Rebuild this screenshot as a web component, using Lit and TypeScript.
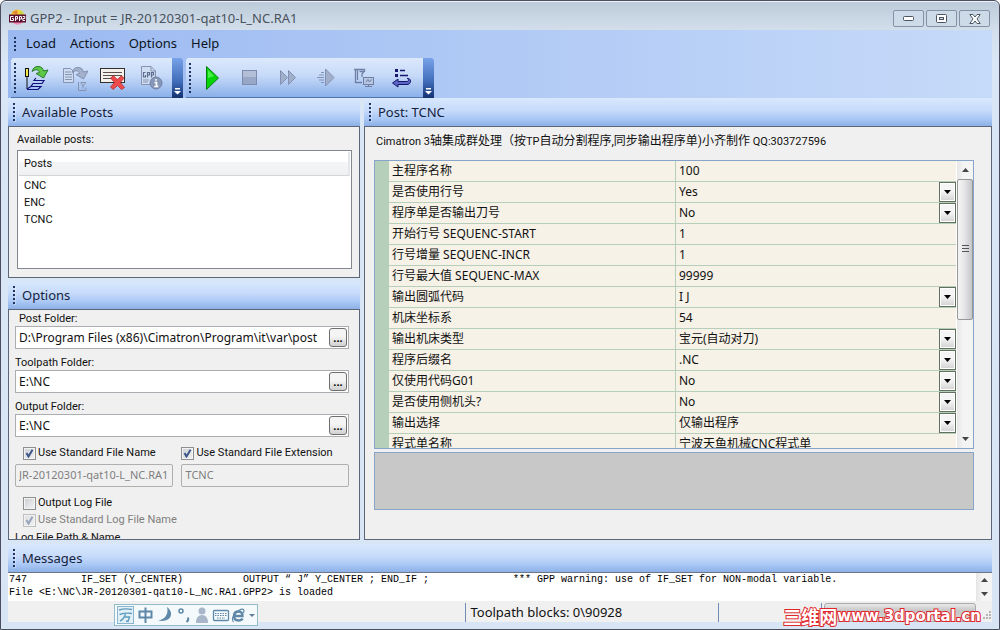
import { LitElement, html, css, svg, nothing } from "lit";
import { customElement, property, state } from "lit/decorators.js";
import { classMap } from "lit/directives/class-map.js";

type Row = { name: string; value: string; options?: string[] };

const ROWS: Row[] = [
  { name: "主程序名称", value: "100" },
  { name: "是否使用行号", value: "Yes", options: ["Yes", "No"] },
  { name: "程序单是否输出刀号", value: "No", options: ["No", "Yes"] },
  { name: "开始行号 SEQUENC-START", value: "1" },
  { name: "行号增量 SEQUENC-INCR", value: "1" },
  { name: "行号最大值 SEQUENC-MAX", value: "99999" },
  { name: "输出圆弧代码", value: "I J", options: ["I J", "R"] },
  { name: "机床坐标系", value: "54" },
  { name: "输出机床类型", value: "宝元(自动对刀)", options: ["宝元(自动对刀)"] },
  { name: "程序后缀名", value: ".NC", options: [".NC"] },
  { name: "仅使用代码G01", value: "No", options: ["No", "Yes"] },
  { name: "是否使用侧机头?", value: "No", options: ["No", "Yes"] },
  { name: "输出选择", value: "仅输出程序", options: ["仅输出程序"] },
  { name: "程式单名称", value: "宁波天鱼机械CNC程式单" },
];

const POSTS = ["CNC", "ENC", "TCNC"];

const LOG = [
  "747" + " ".repeat(9) + "IF_SET (Y_CENTER)" + " ".repeat(10) + "OUTPUT “ J” Y_CENTER ; END_IF ;" +
    " ".repeat(14) + "*** GPP warning: use of IF_SET for NON-modal variable.",
  "File <E:\\NC\\JR-20120301-qat10-L_NC.RA1.GPP2> is loaded",
].join("\n");

const reloadArrow = (fill: string, edge: string) => svg`
  <path d="M8 6.5C9 3 11 1.5 14 1.5C17.5 1.5 19 3.5 19.5 6L24 5L19.500 13L12 8.500L15.500 7.500C15 5.500 13.500 4.500 12 4.700C10.500 4.900 9.500 5.500 8 6.500Z"
    fill=${fill} stroke=${edge} stroke-width="1"/>`;

const ICONS: Record<string, unknown> = {
  load: svg`
    <rect x="1.500" y="3.500" width="3" height="8" fill="#f4e84a" stroke="#111"/>
    <path d="M3 12V24" stroke="#111" fill="none"/>
    <path d="M3 24.500H14L17 21.500H7L9 18.500H18L20 15.500H10L12 13M3 24L7 21.500" stroke="#10107c" fill="none" stroke-width="1.200"/>
    ${reloadArrow("#5cc947", "#2a7a2c")}`,
  convert: svg`
    <path d="M1.500 3.500H8.500L11.500 6.500V17.500H1.500Z" fill="#cddcf0" stroke="#8793b0"/>
    <path d="M3 7H9M3 9.500H10M3 12H10M3 14.500H10" stroke="#8793b0"/>
    <g transform="translate(2 1)">${reloadArrow("#a3b1cc", "#8491b0")}</g>
    <path d="M16.500 17V25.500H24V22.500M18.500 17.500H24M19 18L21 21L23.500 18M21 21V23.500" stroke="#8793b0" fill="none"/>`,
  remove: svg`
    <rect x="0.500" y="3.500" width="24" height="14" fill="#f4f1ec" stroke="#34302e"/>
    <path d="M3 7.500H22M3 10.500H22M3 13.500H12" stroke="#57504c"/>
    <path d="M10.500 13L13.500 10.800L17.300 14.500L21.500 10.800L24 13.200L20.300 17.500L24.500 22.500L21.500 24.500L17.500 20.500L13 24.500L10.500 22L14.500 17.500Z" fill="#ee4b4b" stroke="#b32a35" stroke-width="0.800"/>`,
  info: svg`
    <path d="M3.500 1.500H13L17.500 6V19.500H3.500Z" fill="#cfdef3" stroke="#8793b0"/>
    <path d="M13 1.500V6H17.500" fill="none" stroke="#8793b0"/>
    <path d="M7.500 7.500H5.500V12H7.500V10M9.500 12.500V7.500H11.500V10H9.500M13.500 12.500V7.500H15.500V10H13.500" fill="none" stroke="#5f6d90" stroke-width="1.200"/>
    <path d="M5 15H11M5 17H10" stroke="#8793b0"/>
    <circle cx="18" cy="18" r="6" fill="#8797b8" stroke="#6f80a6"/>
    <path d="M18 14V15.800M16.500 17.500H18.500V21.500M16.300 21.500H20.300" stroke="#fff" stroke-width="1.600" fill="none"/>`,
  play: svg`<path d="M7.500 1.500L19.500 13L7.500 24.500Z" fill="#07d407" stroke="#0a7d12" stroke-width="1"/><path d="M9 5L15 11L9 13Z" fill="#49f049"/>`,
  stop: svg`<rect x="5.500" y="5.500" width="14" height="14" fill="#98a7c6" stroke="#7d8cae"/><rect x="6" y="6" width="13" height="6" fill="#b3bfd7"/>`,
  forward: svg`<path d="M5.500 5.500L12.500 12.500L5.500 19.500ZM13.500 5.500L20.500 12.500L13.500 19.500Z" fill="#a1afcb" stroke="#8392b4"/>`,
  step: svg`<path d="M12.500 4L21 12.500L12.500 21Z" fill="#a1afcb" stroke="#8392b4"/>
    <path d="M8 7.500H11M6 10H11M4 12.500H11M6 15H11M8 17.500H11" stroke="#8392b4"/>`,
  machine: svg`
    <path d="M3 4.500H6M4.500 4V17.500H11M6.500 4.500V15M6 4.500H13.500V7M8.500 6.500H13L11 9V12" fill="none" stroke="#6f7fa5" stroke-width="1.300"/>
    <rect x="12.500" y="12.500" width="10" height="7" fill="#b7c6e0" stroke="#6f7fa5"/>
    <path d="M15 17L17 14.500L18.500 17L20.500 14.500M14 21.500H21M17.500 20V21" stroke="#6f7fa5" fill="none"/>`,
  list: svg`
    <rect x="6" y="4" width="3" height="3" fill="#16166e"/><rect x="6" y="9" width="3" height="3" fill="#16166e"/>
    <path d="M11 5.500H16M11 10.500H19" stroke="#16166e" stroke-width="1.600"/>
    <path d="M3.500 18L9 14V16.500H18C20 16.500 20 13.500 18 13.500C22.500 12.500 23 19.500 18 19.500H9V22Z" fill="#5b66c4" stroke="#16166e"/>`,
};

const font = css`"Noto Sans", "Noto Sans CJK SC", sans-serif`;
const small = css`Roboto, "Noto Sans CJK SC", sans-serif`;

@customElement("dock-header")
export class DockHeader extends LitElement {
  static styles = css`
    :host {
      display: flex;
      align-items: center;
      gap: 7px;
      height: 28px;
      flex: none;
      padding-left: 5px;
      background: linear-gradient(#d8e8fd, #c6dafa 45%, #a9c7f5 75%, #8db0e6);
      color: #16233c;
      font: 13px/18px ${font};
    }
    .grip {
      width: 2px;
      height: 18px;
      background: repeating-linear-gradient(#1f3560 0 2px, transparent 2px 4px);
      box-shadow: 1px 1px 0 rgba(255, 255, 255, 0.3);
    }
    .title {
      margin: 0;
      font: inherit;
    }
  `;
  render() {
    return html`<span class="grip"></span><h2 class="title"><slot></slot></h2>`;
  }
}

@customElement("tool-strip")
export class ToolStrip extends LitElement {
  @property({ attribute: false }) tools: [string, string][] = [];

  static styles = css`
    :host {
      display: flex;
      height: 40px;
      border-radius: 3px 3px 0 0;
      overflow: hidden;
      background: linear-gradient(#dce9fc, #c5d9f8 45%, #88aee8);
      box-shadow: inset 0 -1px #5375ad;
    }
    .grip {
      width: 2px;
      margin: 5px 2px 5px 3px;
      background: repeating-linear-gradient(#1f3560 0 2px, transparent 2px 4px);
    }
    .tool {
      display: grid;
      place-items: center;
      width: 38px;
      padding: 0;
      border: 0;
      background: none;
    }
    .icon {
      width: 26px;
      height: 26px;
    }
    .more {
      display: grid;
      align-items: end;
      justify-items: center;
      width: 11px;
      margin-left: 2px;
      padding: 0 0 3px;
      border: 0;
      background: linear-gradient(#78a2e8, #3f6bb8 60%, #13316f);
    }
  `;
  render() {
    return html`<span class="grip"></span>
      ${this.tools.map(
        ([icon, label]) => html`<button class="tool" aria-label=${label}>
          <svg class="icon" viewBox="0 0 26 26" aria-hidden="true">${ICONS[icon]}</svg>
        </button>`
      )}
      <button class="more" aria-label="Toolbar options">
        <svg width="7" height="7" viewBox="0 0 7 7"><path d="M1 0H6V1.500H1ZM0 3H7L3.500 6.500Z" fill="#fff" /></svg>
      </button>`;
  }
}

@customElement("scroll-track")
export class ScrollTrack extends LitElement {
  @property({ type: Boolean }) thumb = false;

  static styles = css`
    :host {
      display: flex;
      flex-direction: column;
      justify-content: space-between;
      width: 16px;
      flex: none;
      background: linear-gradient(90deg, #e6e6e6, #f4f4f4 40%);
    }
    .end {
      display: grid;
      place-items: center;
      height: 18px;
      padding: 0;
      border: 0;
      background: none;
    }
    .compact {
      height: 14px;
    }
    .run {
      flex: 1;
    }
    .bar {
      box-sizing: border-box;
      display: grid;
      place-items: center;
      height: 56%;
      border: 1px solid #979797;
      border-radius: 2px;
      background: linear-gradient(90deg, #f5f5f5, #e6e6e8 45%, #c4c6ca);
    }
  `;
  render() {
    const cls = classMap({ end: true, compact: !this.thumb });
    return html`<button class=${cls} aria-label="Scroll up">
        <svg width="7" height="4"><path d="M0 4L3.500 0L7 4Z" fill="#444" /></svg>
      </button>
      ${this.thumb
        ? html`<div class="run"><div class="bar">
            <svg width="7" height="8"><path d="M0 .5H7M0 3.500H7M0 6.500H7" stroke="#555" /></svg>
          </div></div>`
        : nothing}
      <button class=${cls} aria-label="Scroll down">
        <svg width="7" height="4"><path d="M0 0L3.500 4L7 0Z" fill="#444" /></svg>
      </button>`;
  }
}

@customElement("property-grid")
export class PropertyGrid extends LitElement {
  @property({ attribute: false }) rows: Row[] = [];

  static styles = css`
    :host {
      display: flex;
      overflow: hidden;
      border: 1px solid #86a5c9;
      background: #f6f2e7;
      font: 12px/20px ${font};
      color: #111;
    }
    .view {
      flex: 1;
      min-width: 0;
      overflow: hidden;
    }
    .table {
      width: 100%;
      table-layout: fixed;
      border-collapse: separate;
      border-spacing: 0;
      border-right: 1px solid #fff;
    }
    .gutter-col {
      width: 14px;
    }
    .name-col {
      width: 49.4%;
    }
    .gutter,
    .name,
    .value {
      box-sizing: border-box;
      height: 21px;
      padding: 0;
      border-bottom: 1px solid #b5cfbb;
      text-align: left;
      font-weight: 400;
    }
    .gutter {
      background: #b5cfbb;
    }
    .name {
      padding-left: 3px;
      border-right: 1px solid #b5cfbb;
      white-space: nowrap;
    }
    .cell {
      display: grid;
      grid-template-columns: minmax(0, 1fr) 17px;
      height: 20px;
    }
    .field {
      grid-area: 1 / 1 / 2 / 3;
      width: 100%;
      height: 20px;
      padding: 0 3px;
      border: 0;
      outline: 0;
      appearance: none;
      background: transparent;
      font: inherit;
      color: inherit;
    }
    .drop {
      grid-area: 1 / 2;
      box-sizing: border-box;
      display: grid;
      place-items: center;
      border: 1px solid #61705f;
      box-shadow: inset 0 0 0 1px #fff;
      background: linear-gradient(#f5f5f5 45%, #d2d2d2);
      pointer-events: none;
    }
  `;
  render() {
    return html`<div class="view">
        <table class="table">
          <colgroup><col class="gutter-col" /><col class="name-col" /><col /></colgroup>
          <tbody>
            ${this.rows.map(
              (r, i) => html`<tr>
                <td class="gutter"></td>
                <th class="name" scope="row"><label for="p${i}">${r.name}</label></th>
                <td class="value">
                  <div class="cell">
                    ${r.options
                      ? html`<select class="field" id="p${i}">
                            ${r.options.map((o) => html`<option ?selected=${o === r.value}>${o}</option>`)}
                          </select>
                          <span class="drop"><svg width="7" height="4"><path d="M0 0H7L3.500 4Z" fill="#000" /></svg></span>`
                      : html`<input class="field" id="p${i}" .value=${r.value} />`}
                  </div>
                </td>
              </tr>`
            )}
          </tbody>
        </table>
      </div>
      <scroll-track thumb></scroll-track>`;
  }
}

@customElement("app-root")
export class AppRoot extends LitElement {
  @state() private logging = false;

  static styles = css`
    :host {
      display: block;
      font: 12px/16px ${font};
      color: #111;
    }
    .window {
      box-sizing: border-box;
      position: relative;
      display: flex;
      flex-direction: column;
      height: 100vh;
      min-height: 560px;
      padding: 0 7px 7px;
      border: 1px solid #4b4e5c;
      border-radius: 6px 6px 0 0;
      background: linear-gradient(#bccad9, #d3dfeb 30px, #d9e6f5 60px, #d8e5f4);
      box-shadow: inset 0 1px #eef4fa;
    }
    .titlebar {
      display: flex;
      align-items: center;
      gap: 4px;
      height: 29px;
      padding: 0 2px 0 1px;
      flex: none;
      font-size: 13px;
      color: #49525d;
    }
    .title {
      flex: 1;
      margin: 4px 0 0;
      font: inherit;
    }
    .logo {
      margin-top: 4px;
    }
    .winbtns {
      display: flex;
      gap: 2px;
      margin-top: 6px;
    }
    .winbtn {
      display: grid;
      place-items: center;
      width: 31px;
      height: 17px;
      box-sizing: border-box;
      padding: 0;
      border: 1px solid #8592a6;
      border-radius: 2px;
      background: #cddae7;
    }
    .bars {
      flex: none;
      background: linear-gradient(90deg, #9bb9f1, #c6daf9);
    }
    .menu {
      display: flex;
      align-items: center;
      height: 28px;
      padding-left: 6px;
      font-size: 13px;
    }
    .grip {
      width: 2px;
      height: 14px;
      margin-right: 3px;
      background: repeating-linear-gradient(#1f3560 0 2px, transparent 2px 4px);
    }
    .item {
      padding: 0 7px 2px;
      border: 0;
      background: none;
      font: inherit;
      color: #0c1422;
    }
    .strips {
      display: flex;
      gap: 3px;
      padding-left: 3px;
    }
    .main {
      flex: 1;
      min-height: 0;
      display: grid;
      grid-template-columns: minmax(0, 352fr) minmax(0, 628fr);
      gap: 4px;
    }
    .dock {
      display: flex;
      flex-direction: column;
      min-height: 0;
    }
    .panel {
      box-sizing: border-box;
      border: 1px solid #5d6679;
      background: #f0f0f0;
      font: 11px/14px ${small};
    }
    .posts {
      margin-bottom: 3px;
      padding: 6px 7px 8px 8px;
    }
    .listbox {
      box-sizing: border-box;
      height: 119px;
      margin-top: 3px;
      padding: 1px;
      border: 1px solid #828790;
      background: #fff;
    }
    .posthead {
      padding: 5px 5px 4px;
      border-right: 2px solid #e3e6ea;
      border-bottom: 1px solid #d5d5d5;
      background: linear-gradient(#fff 42%, #f4f5f7 42%, #f0f1f3);
    }
    .postlist {
      margin: 1px 0 0;
      padding: 0 5px;
      list-style: none;
      line-height: 17px;
    }
    .options {
      flex: 1;
      min-height: 0;
      overflow: hidden;
      padding: 2px 10px 0 6px;
    }
    .label {
      display: block;
      margin-top: 7px;
    }
    .first {
      margin: 0 0 0 4px;
    }
    .box {
      display: flex;
      align-items: center;
      box-sizing: border-box;
      height: 23px;
      padding-right: 1px;
      border: 1px solid #abadb3;
      background: #fff;
    }
    .path {
      flex: 1;
      min-width: 0;
      height: 21px;
      box-sizing: border-box;
      padding: 0 0 0 3px;
      border: 0;
      outline: 0;
      background: none;
      font: 12px/20px ${font};
      color: #111;
    }
    .browse {
      width: 18px;
      height: 19px;
      padding: 0;
      border: 1px solid #707070;
      border-radius: 3px;
      background: linear-gradient(#f4f4f4 45%, #cfcfcf);
      font: bold 11px/16px ${font};
    }
    .pair {
      display: grid;
      grid-template-columns: 158fr 167fr;
      gap: 8px;
    }
    .checks {
      margin: 8px 0 3px;
    }
    .checkline {
      display: flex;
      align-items: center;
      gap: 2px;
      height: 16px;
      padding-left: 8px;
      white-space: nowrap;
    }
    .near {
      padding-left: 0;
    }
    .check {
      width: 13px;
      height: 13px;
      margin: 0;
      flex: none;
      box-sizing: border-box;
      appearance: none;
      border: 1px solid #8e8f8f;
      box-shadow: inset 0 0 0 1px #f4f4f4;
      background: linear-gradient(135deg, #c9cdd3, #f4f4f4);
    }
    .check:checked {
      background: url("data:image/svg+xml,%3Csvg xmlns='http://www.w3.org/2000/svg' viewBox='0 0 11 11'%3E%3Cpath d='M2.500 5L4.500 8.500L8.500 1.800' fill='none' stroke='%233f5788' stroke-width='2'/%3E%3C/svg%3E"),
        linear-gradient(135deg, #c9cdd3, #f4f4f4);
    }
    .check:disabled {
      opacity: 0.5;
    }
    .muted {
      margin: 1px 0 3px;
      color: #7f7f7f;
    }
    .locked {
      min-width: 0;
      box-sizing: border-box;
      height: 23px;
      padding: 0 3px 2px;
      border: 1px solid #afafaf;
      border-radius: 2px;
      background: #f0f0f0;
      font: 11px/18px ${font};
      color: #7f7f7f;
    }
    .logcheck {
      margin-top: 8px;
    }
    .post {
      flex: 1;
      min-height: 0;
      display: flex;
      flex-direction: column;
      padding: 0 17px 29px 9px;
    }
    .caption {
      margin: 0;
      padding: 4px 2px 8px;
      flex: none;
      line-height: 20px;
      white-space: nowrap;
    }
    .caption .han {
      font-size: 12px;
    }
    .props {
      flex: 1;
      min-height: 0;
    }
    .preview {
      flex: none;
      height: 56px;
      margin-top: 3px;
      border: 1px solid #86a5c9;
      background: #c8c8c8;
    }
    .msghead {
      margin-top: 4px;
    }
    .messages {
      display: flex;
      flex: none;
      box-sizing: border-box;
      height: 29px;
      border-top: 1px solid #6c7687;
      background: #fff;
    }
    .log {
      flex: 1;
      margin: 0;
      padding-left: 1px;
      overflow: hidden;
      font: 10px/13px "Liberation Mono", monospace;
      color: #000;
    }
    .status {
      display: flex;
      flex: none;
      height: 21px;
      background: #f0f0f0;
      font-size: 13px;
      line-height: 22px;
    }
    .part {
      box-sizing: border-box;
      margin-top: 2px;
      padding-left: 4px;
      border-left: 1px solid #6f8db5;
      line-height: 18px;
    }
    .lead {
      flex: 457;
    }
    .blocks {
      flex: 247;
    }
    .spare {
      flex: 98;
    }
    .last {
      flex: 168;
      display: flex;
      gap: 6px;
      padding-left: 2px;
    }
    .progress {
      box-sizing: border-box;
      width: 152px;
      height: 19px;
      appearance: none;
      border: 1px solid #a9a9a9;
      border-radius: 3px;
      background: linear-gradient(#e9e9e9, #c6c6c6 40%, #d6d6d6);
    }
    .progress::-webkit-progress-bar {
      background: transparent;
    }
    .ime {
      position: absolute;
      left: 113px;
      bottom: 3px;
      box-sizing: border-box;
      display: flex;
      align-items: center;
      width: 144px;
      height: 22px;
      border: 1px solid #93bdca;
      background: #f4fafc;
    }
    .watermark {
      position: absolute;
      right: 18px;
      bottom: 3px;
      display: flex;
      align-items: center;
      font: bold 15px/20px "DejaVu Sans", sans-serif;
      color: #fff;
      -webkit-text-stroke: 2px #e0252b;
      paint-order: stroke fill;
    }
    .site {
      font: bold 18px/20px "Noto Sans CJK SC", sans-serif;
    }
  `;

  private folder(id: string, label: string, value: string, first = false) {
    return html`<label class=${classMap({ label: true, first })} for=${id}>${label}</label>
      <div class="box">
        <input class="path" id=${id} .value=${value} />
        <button class="browse" aria-label="Browse ${label}">...</button>
      </div>`;
  }

  render() {
    return html`<div class="window">
      <header class="titlebar">
        <svg class="logo" width="17" height="18" viewBox="0 0 17 18">
          <circle cx="8.500" cy="7.500" r="7" fill="#f0d23c" />
          <path d="M3 4A7 7 0 0 1 8 1L9 6Z" fill="#e5892f" /><path d="M12 2A7 7 0 0 1 15 9H9Z" fill="#bcd84a" />
          <path d="M3 13H14A7 7 0 0 1 3 13Z" fill="#ef8fb4" />
          <rect x="0" y="5.500" width="17" height="8" fill="#5e1030" />
          <path d="M4.500 7.500H1.500V11.500H4.500V9.500H3M6.500 12V7.500H8.500V10H6.500M10.500 12V7.500H12.500V10H10.500M13.800 7.500H15.800V9.500H13.800V11.500H16" fill="none" stroke="#fff" />
        </svg>
        <h1 class="title">GPP2 - Input = JR-20120301-qat10-L_NC.RA1</h1>
        <div class="winbtns">
          <button class="winbtn" aria-label="Minimize">
            <svg width="12" height="6"><rect x="0.500" y="0.500" width="10" height="4" rx="1" fill="#fff" stroke="#4c5563" /></svg>
          </button>
          <button class="winbtn" aria-label="Maximize">
            <svg width="11" height="9"><rect x="0.500" y="0.500" width="10" height="8" rx="1" fill="#fff" stroke="#4c5563" /><rect x="3.500" y="3.500" width="4" height="2" fill="#cddae7" stroke="#4c5563" /></svg>
          </button>
          <button class="winbtn" aria-label="Close">
            <svg width="12" height="10" viewBox="0 0 12 10"><path d="M.8 .5H4L6 3L8 .5H11.200L8 5L11.200 9.500H8L6 7L4 9.500H.8L4 5Z" fill="#fff" stroke="#4c5563" /></svg>
          </button>
        </div>
      </header>
      <div class="bars">
        <nav class="menu">
          <span class="grip"></span>
          ${["Load", "Actions", "Options", "Help"].map((m) => html`<button class="item">${m}</button>`)}
        </nav>
        <div class="strips">
          <tool-strip .tools=${[["load", "Load"], ["convert", "Convert"], ["remove", "Remove"], ["info", "Post info"]]}></tool-strip>
          <tool-strip .tools=${[["play", "Run"], ["stop", "Stop"], ["forward", "Fast forward"], ["step", "Step"], ["machine", "Machine"], ["list", "Output list"]]}></tool-strip>
        </div>
      </div>
      <main class="main">
        <div class="dock">
          <dock-header>Available Posts</dock-header>
          <section class="panel posts">
            <span>Available posts:</span>
            <div class="listbox">
              <div class="posthead">Posts</div>
              <ul class="postlist">${POSTS.map((p) => html`<li>${p}</li>`)}</ul>
            </div>
          </section>
          <dock-header>Options</dock-header>
          <section class="panel options">
            ${this.folder("post", "Post Folder:", "D:\\Program Files (x86)\\Cimatron\\Program\\it\\var\\post", true)}
            ${this.folder("toolpath", "Toolpath Folder:", "E:\\NC")}
            ${this.folder("output", "Output Folder:", "E:\\NC")}
            <div class="pair checks">
              <label class="checkline"><input class="check" type="checkbox" checked />Use Standard File Name</label>
              <label class="checkline near"><input class="check" type="checkbox" checked />Use Standard File Extension</label>
            </div>
            <div class="pair">
              <input class="locked" disabled aria-label="File name" .value=${"JR-20120301-qat10-L_NC.RA1"} />
              <input class="locked" disabled aria-label="File extension" .value=${"TCNC"} />
            </div>
            <label class="checkline logcheck"><input class="check" type="checkbox" .checked=${this.logging}
              @change=${() => (this.logging = !this.logging)} />Output Log File</label>
            <label class="checkline muted"><input class="check" type="checkbox" checked disabled />Use Standard Log File Name</label>
            <span>Log File Path &amp; Name</span>
          </section>
        </div>
        <div class="dock">
          <dock-header>Post: TCNC</dock-header>
          <section class="panel post">
            <p class="caption">Cimatron 3<span class="han">轴集成群处理（按</span>TP<span class="han">自动分割程序,同步输出程序单)小齐制作</span> QQ:303727596</p>
            <property-grid class="props" .rows=${ROWS}></property-grid>
            <div class="preview"></div>
          </section>
        </div>
      </main>
      <dock-header class="msghead">Messages</dock-header>
      <div class="messages"><pre class="log">${LOG}</pre><scroll-track></scroll-track></div>
      <footer class="status">
        <span class="lead"></span>
        <span class="part blocks">Toolpath blocks: 0\\90928</span>
        <span class="part spare"></span>
        <span class="part last">
          <progress class="progress" value="0" max="100" aria-label="Progress"></progress>
          <svg width="9" height="18"><path d="M7 9h2M4 12h2M7 12h2M1 15h2M4 15h2M7 15h2" stroke="#b5b5b5" stroke-width="2" /></svg>
        </span>
      </footer>
      <div class="ime">
        <svg width="142" height="20" viewBox="0 0 142 20" fill="none" stroke="#5f88a8" stroke-width="2">
          <rect x="2.500" y="1.500" width="16" height="17" fill="#e3f1f7" stroke="#8bb5cc" stroke-width="1" />
          <path d="M4 5Q10 3 17 4.500M4.500 9.500Q11 7.500 17 8.500M10.500 9Q9 14 5 16M10 12H14.500L13 16.500L11 16" stroke="#5f9cc0" stroke-width="1.400" />
          <path d="M24.500 6.500H36.500V12.500H24.500ZM30.500 2.500V18" />
          <path d="M52 2C60 8 56 18 43 15.500C50 14.500 54 9 52 2Z" fill="#5f88a8" stroke="none" />
          <circle cx="66" cy="6" r="2" stroke-width="1.500" /><path d="M73 12.500Q74 15 71.500 17" />
          <g fill="#a9b6ca" stroke="none"><circle cx="87" cy="6" r="3.500" /><path d="M81 18Q81 10 87 10Q93 10 93 18Z" /></g>
          <rect x="98.500" y="5.500" width="15" height="10" rx="1" stroke-width="1.300" />
          <path d="M100 8.500H112M100 10.500H112M102 13H110" stroke-width="1" stroke-dasharray="1.500 1" />
          <path d="M119.500 11H127.500Q127.500 6.500 123.500 6.500Q119 6.500 119 11Q119 15.500 123.500 15.500Q126.500 15.500 127.500 13.500" stroke-width="2.400" />
          <path d="M118.500 17Q115.500 14 120.500 8.500Q126 3 128.500 4.500Q129.500 5.500 128.500 8" stroke-width="1.200" />
          <path d="M134 9H140L137 12Z" fill="#5f7d94" stroke="none" />
        </svg>
      </div>
      <div class="watermark"><span class="site">三维网</span>www.3dportal.cn</div>
    </div>`;
  }
}
